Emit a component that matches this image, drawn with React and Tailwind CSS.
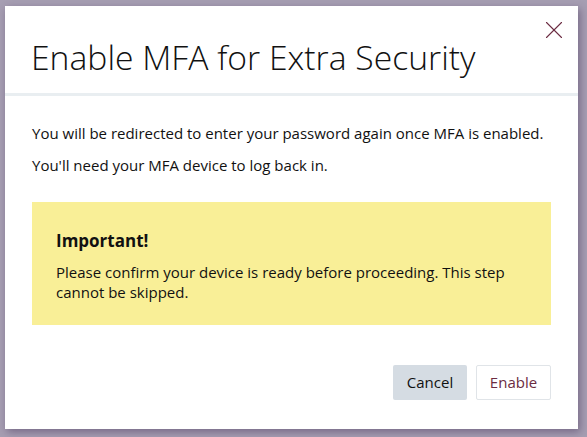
import { X } from 'lucide-react';

export default function App() {
  return (
    <div className="min-h-[437px] w-full bg-[#a69eb2] pl-[5px] pt-[6px]" style={{ fontFamily: '"Open Sans", sans-serif' }}>
      <div className="flex h-[423px] w-[573px] flex-col bg-white shadow-[2px_3px_8px_rgba(60,40,80,0.45)]">
        {/* header */}
        <div className="relative h-[90px] border-b-[3px] border-[#e9eef1] pl-[26px] pt-[31px]">
          <h2 className="text-[33.7px] font-light leading-[40px] text-[#111]">Enable MFA for Extra Security</h2>
          <button className="absolute right-[9px] top-[9px] text-[#6b2c42]" aria-label="Close">
            <X className="h-[30px] w-[30px]" strokeWidth={0.9} />
          </button>
        </div>

        {/* body */}
        <div className="flex-1 px-[27px] pt-[27px] text-[15px] text-[#111]">
          <p className="leading-[20px]">You will be redirected to enter your password again once MFA is enabled.</p>
          <p className="mt-[12px] leading-[20px]">You'll need your MFA device to log back in.</p>

          <div className="mt-[27px] h-[123px] w-[519px] bg-[#f9ef97] px-[24px] pt-[27px]">
            <h3 className="text-[17px] font-bold leading-[24px]">Important!</h3>
            <p className="mt-[9px] text-[15px] leading-[20px]">
              Please confirm your device is ready before proceeding. This step cannot be skipped.
            </p>
          </div>

          <div className="mt-[40px] flex justify-end gap-[9px]">
            <button className="h-[35px] w-[74px] rounded-[2px] bg-[#d5dce3] text-[15px] text-[#111]">Cancel</button>
            <button className="h-[35px] w-[75px] rounded-[2px] border border-[#e0e4e8] bg-white text-[15px] text-[#6b2c42]">Enable</button>
          </div>
        </div>
      </div>
    </div>
  );
}
